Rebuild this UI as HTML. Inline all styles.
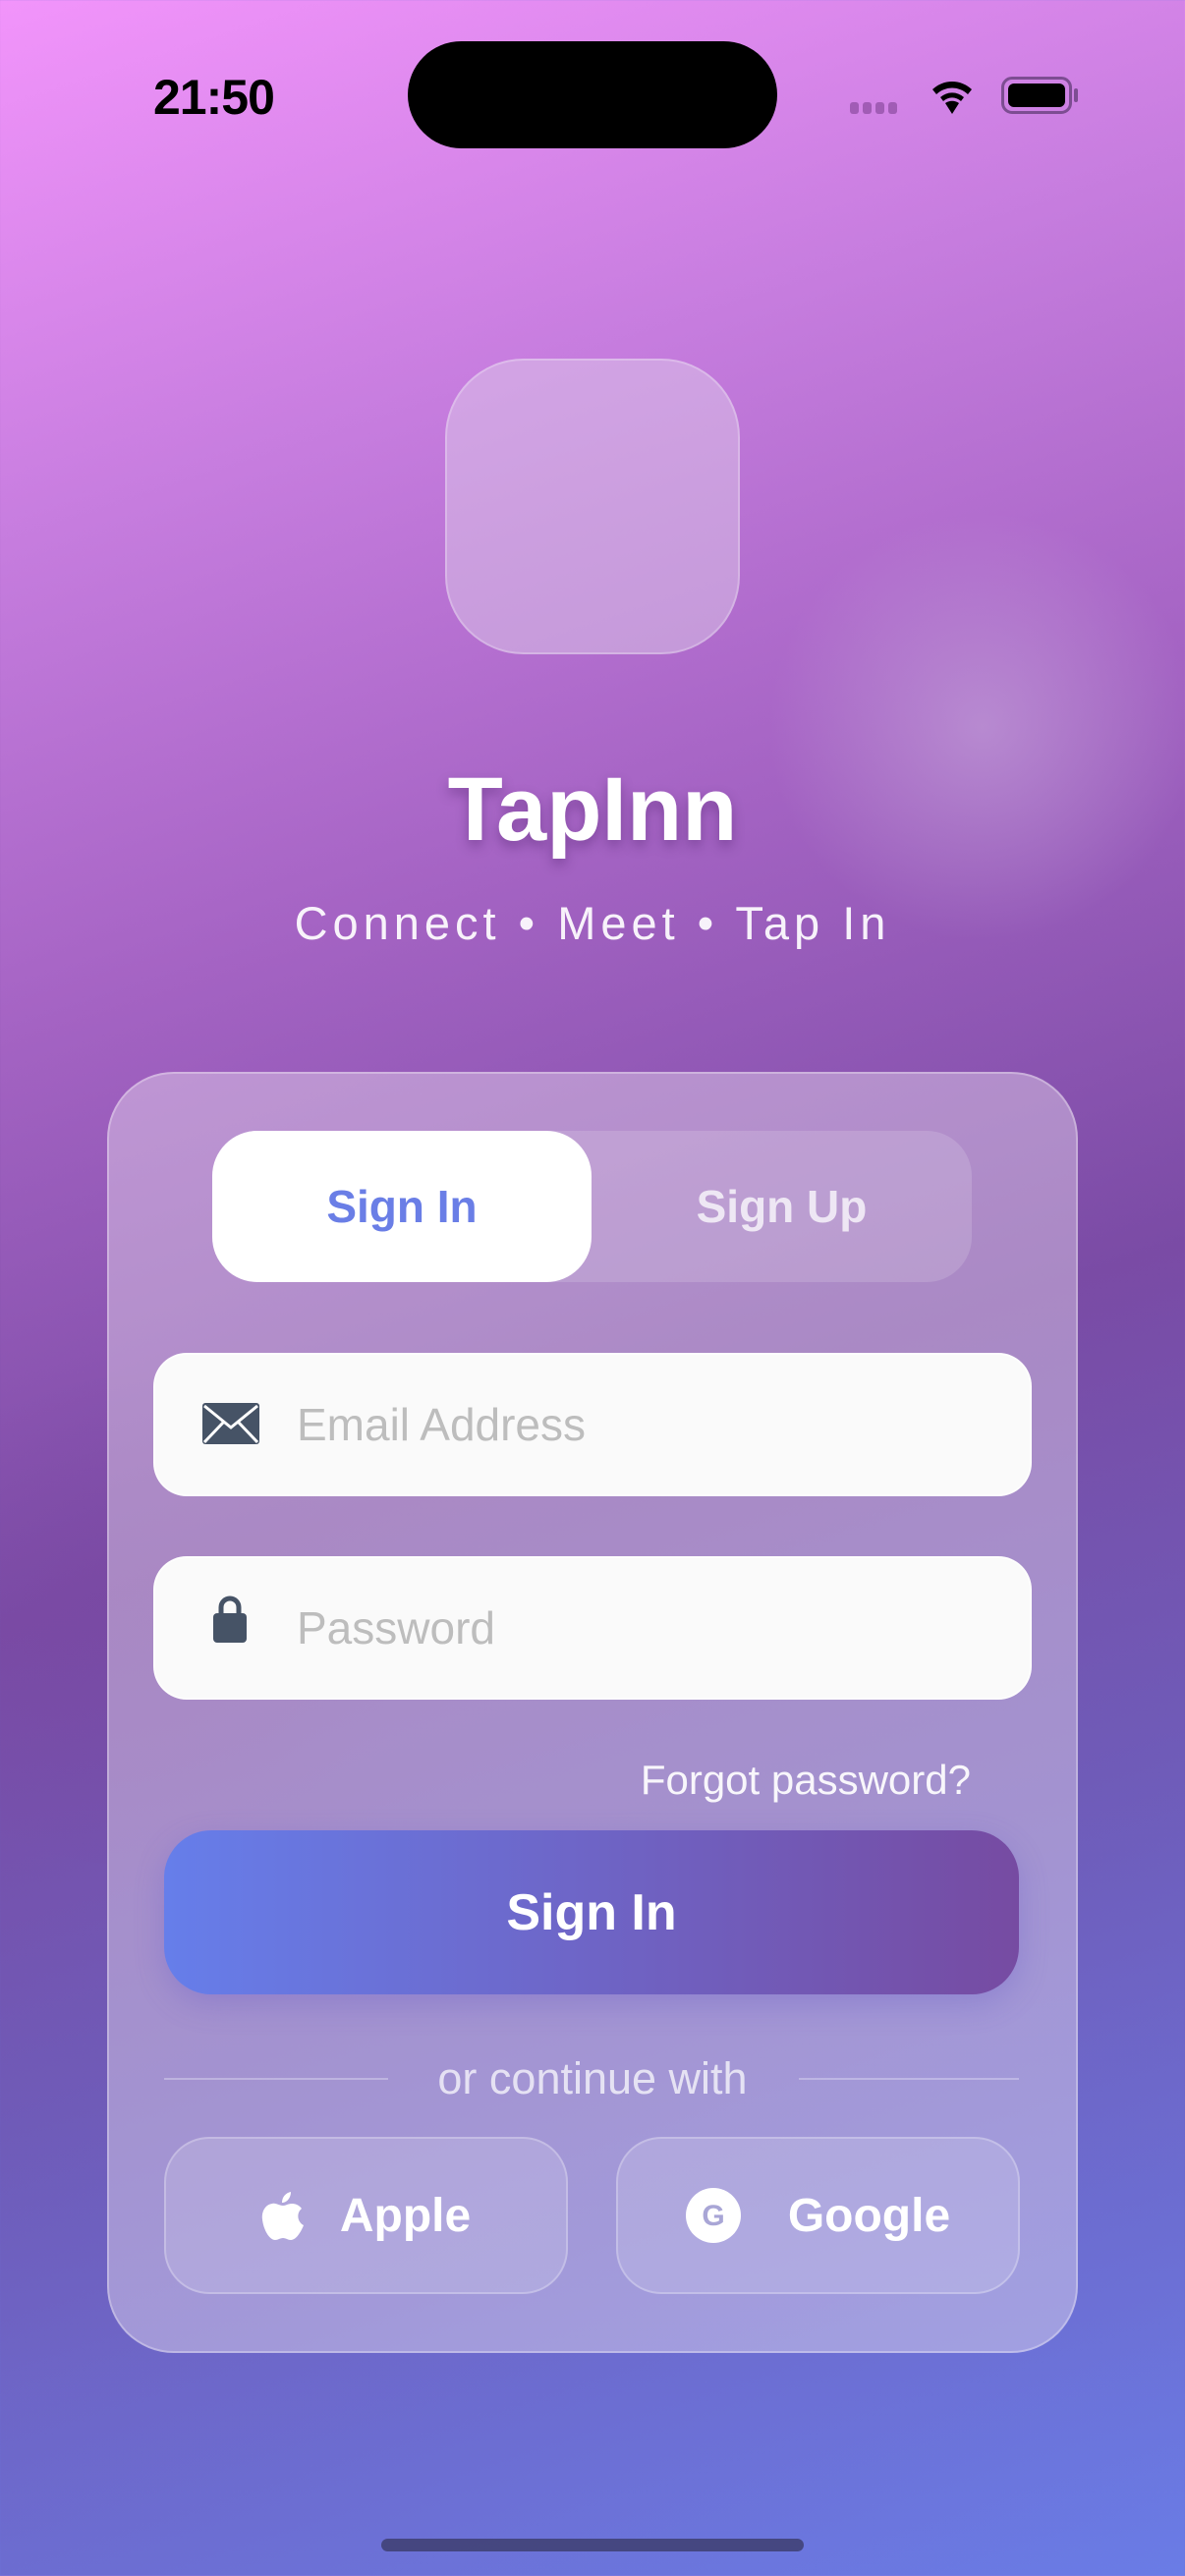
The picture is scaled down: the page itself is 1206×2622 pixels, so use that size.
<!DOCTYPE html>
<html><head><meta charset="utf-8"><style>
*{margin:0;padding:0;box-sizing:border-box}
body{width:1206px;height:2622px;overflow:hidden;position:relative;font-family:"Liberation Sans",sans-serif;
background:linear-gradient(162deg,#f294fb 0%,#c77ddf 18%,#a463c3 35%,#7a4ba5 55%,#6f5bb8 72%,#6a7ce6 100%);}
.glow{position:absolute;left:780px;top:520px;width:440px;height:440px;border-radius:50%;background:radial-gradient(circle,rgba(200,170,220,.55),rgba(200,170,220,0) 70%)}
.glow2{position:absolute;left:-150px;top:1400px;width:600px;height:500px;border-radius:50%;background:radial-gradient(circle,rgba(120,70,160,.4),rgba(120,70,160,0) 70%)}
.abs{position:absolute}
.time{left:156px;top:70px;font-size:50px;font-weight:700;color:#000;letter-spacing:-1px}
.island{left:415px;top:42px;width:376px;height:109px;border-radius:55px;background:#000}
.icon{left:453px;top:365px;width:300px;height:301px;border-radius:80px;background:rgba(225,210,235,.45);border:2px solid rgba(255,255,255,.25)}
.title{left:0;width:1206px;top:772px;text-align:center;color:#fff;font-size:92px;font-weight:700;text-shadow:0 6px 12px rgba(60,20,90,.35)}
.sub{left:0;width:1206px;top:912px;text-align:center;color:rgba(255,255,255,.92);font-size:47px;letter-spacing:5px}
.card{left:109px;top:1091px;width:988px;height:1304px;border-radius:68px;background:rgba(235,225,240,.42);border:2px solid rgba(255,255,255,.3)}
.seg{left:216px;top:1151px;width:773px;height:154px;border-radius:46px;background:rgba(255,255,255,.15)}
.segon{left:216px;top:1151px;width:386px;height:154px;border-radius:46px;background:#fff;color:#6a7ee6;font-size:46px;font-weight:700;display:flex;align-items:center;justify-content:center}
.segoff{left:602px;top:1151px;width:387px;height:154px;color:rgba(255,255,255,.75);font-size:46px;font-weight:700;display:flex;align-items:center;justify-content:center}
.field{left:156px;width:894px;height:146px;border-radius:34px;background:#fafafa;border:2px solid rgba(255,255,255,.6);color:#bdbdbd;font-size:46px;padding-left:144px;display:flex;align-items:center}
.forgot{right:218px;top:1788px;color:rgba(255,255,255,.92);font-size:42px}
.btn{left:167px;top:1863px;width:870px;height:167px;border-radius:48px;background:linear-gradient(90deg,#667eea,#764ba2);color:#fff;font-size:52px;font-weight:700;display:flex;align-items:center;justify-content:center;box-shadow:0 10px 30px rgba(100,90,200,.3)}
.line{top:2115px;height:2px;background:rgba(255,255,255,.3)}
.or{left:0;width:1206px;top:2090px;text-align:center;color:rgba(255,255,255,.72);font-size:45px}
.soc{top:2175px;width:411px;height:160px;border-radius:46px;background:rgba(255,255,255,.15);border:2px solid rgba(255,255,255,.25);color:#fff;font-size:48px;font-weight:700;display:flex;align-items:center;justify-content:center;gap:36px}
.home{left:388px;top:2584px;width:430px;height:13px;border-radius:7px;background:#3c3c6a;opacity:.8}
</style></head><body>
<div class="glow"></div><div class="glow2"></div>
<div class="abs time">21:50</div>
<div class="abs island"></div>
<div class="abs" style="left:865px;top:104px;display:flex;gap:4px">
<div style="width:9px;height:12px;border-radius:3px;background:rgba(120,60,140,.55)"></div><div style="width:9px;height:12px;border-radius:3px;background:rgba(120,60,140,.55)"></div><div style="width:9px;height:12px;border-radius:3px;background:rgba(120,60,140,.55)"></div><div style="width:9px;height:12px;border-radius:3px;background:rgba(120,60,140,.55)"></div></div>
<svg class="abs" style="left:943px;top:78px" width="52" height="40" viewBox="0 0 52 40"><path d="M26 38 L19 27 A12 12 0 0 1 33 27 Z" fill="#000"/><path d="M14 21 A18 18 0 0 1 38 21 L35 25 A13 13 0 0 0 17 25Z" fill="#000"/><path d="M6 13 A29 29 0 0 1 46 13 L42 18 A23 23 0 0 0 10 18Z" fill="#000"/></svg>
<div class="abs" style="left:1019px;top:78px;width:72px;height:38px;border:3px solid #7d4d92;border-radius:11px;padding:4px"><div style="width:100%;height:100%;background:#000;border-radius:6px"></div></div>
<div class="abs" style="left:1093px;top:90px;width:4px;height:14px;border-radius:2px;background:#7d4d92"></div>
<div class="abs icon"></div>
<div class="abs title">TapInn</div>
<div class="abs sub">Connect • Meet • Tap In</div>
<div class="abs card"></div>
<div class="abs seg"></div>
<div class="abs segon">Sign In</div>
<div class="abs segoff">Sign Up</div>
<div class="abs field" style="top:1377px">Email Address</div>
<svg class="abs" style="left:206px;top:1428px" width="58" height="42" viewBox="0 0 58 42"><rect width="58" height="42" rx="3" fill="#465366"/><path d="M2 3 L29 25 L56 3 M2 40 L21 20 M56 40 L37 20" stroke="#fff" stroke-width="3" fill="none"/></svg>
<div class="abs field" style="top:1584px">Password</div>
<svg class="abs" style="left:217px;top:1622px" width="34" height="50" viewBox="0 0 34 50"><path d="M8 22 V14 A9 9 0 0 1 26 14 V22" stroke="#465366" stroke-width="5" fill="none"/><rect x="0" y="20" width="34" height="30" rx="4" fill="#465366"/></svg>
<div class="abs forgot">Forgot password?</div>
<div class="abs btn">Sign In</div>
<div class="abs line" style="left:167px;width:228px"></div>
<div class="abs line" style="left:813px;width:224px"></div>
<div class="abs or">or continue with</div>
<div class="abs soc" style="left:167px"><svg width="44" height="52" viewBox="0 0 44 52"><path d="M30 2 C30 8 26 13 21 13 C21 7 25 3 30 2Z" fill="#fff"/><path d="M22 16 C18 16 15 13 11 14 C4 15 0 22 1 30 C2 40 8 51 14 51 C17 51 19 49 22 49 C25 49 27 51 30 51 C36 51 41 41 43 36 C37 33 35 24 41 19 C38 15 34 14 31 14 C27 14 25 16 22 16Z" fill="#fff"/></svg>Apple</div>
<div class="abs soc" style="left:627px"><svg width="56" height="56" viewBox="0 0 56 56"><circle cx="28" cy="28" r="28" fill="#fff"/><text x="28" y="38" text-anchor="middle" font-family="Liberation Sans" font-weight="700" font-size="30" fill="#a9a6d6">G</text></svg><span style="margin-left:12px">Google</span></div>
<div class="abs home"></div>
</body></html>
